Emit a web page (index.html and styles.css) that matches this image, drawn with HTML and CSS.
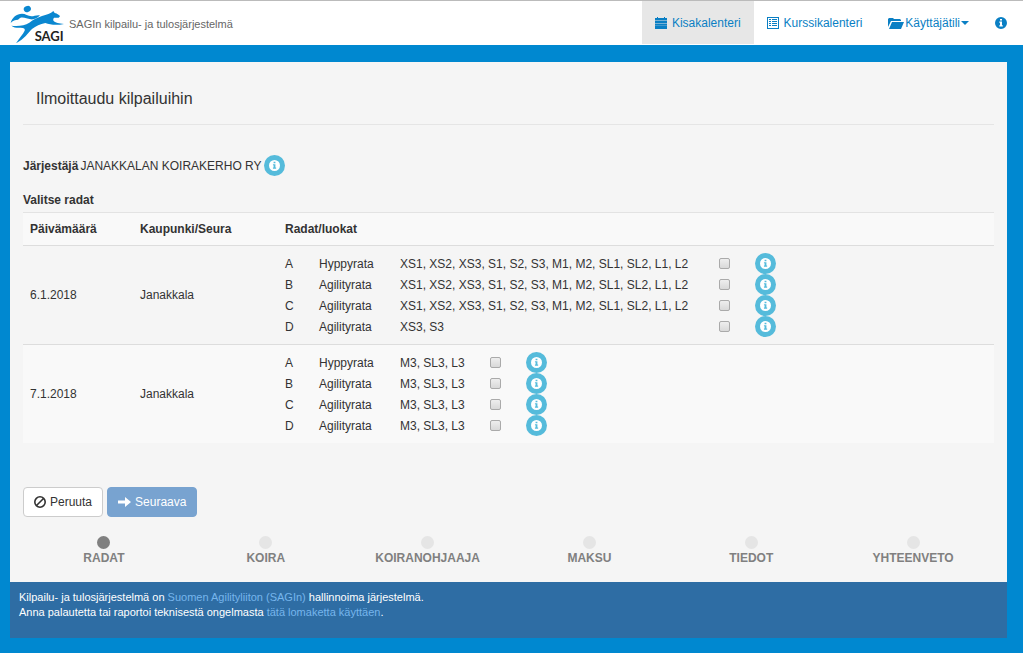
FILE: index.html
```html
<!DOCTYPE html>
<html lang="fi">
<head>
<meta charset="utf-8">
<title>SAGIn kilpailu- ja tulosjärjestelmä</title>
<link rel="stylesheet" href="styles.css">
</head>
<body>
<svg class="defs" width="0" height="0" aria-hidden="true">
  <symbol id="info" viewBox="0 0 12 12"><path fill="currentColor" fill-rule="evenodd" d="M6 0a6 6 0 1 0 0 12A6 6 0 0 0 6 0zM5 2h2v1.600H5zM4.300 4.600H7v3.700h.8v1.200H4.300V8.300H5V5.800h-.7z"/></symbol>
</svg>
<header class="topbar">
  <a class="brand" href="#">
    <svg class="logo" viewBox="30 9 168 126" role="img" aria-label="SAGI">
      <g fill="#0a87d0">
        <ellipse cx="82" cy="27" rx="11" ry="9" transform="rotate(-25 82 27)"/>
        <path d="M32 69C36 52 50 41 66 41C76 41 84 48 94 49C102 49 108 45 120 46C112 55 103 59 92 58C80 56 70 50 60 54L54 59C46 59 38 62 32 69z"/>
        <path d="M34 77C56 80 74 76 88 68C98 60 110 54 126 48C140 44 152 42 160 33L164 39C172 41 178 45 180 49L176 53L162 53C156 62 160 68 192 72C168 77 150 74 136 69C120 72 108 78 96 87C84 99 74 116 48 130C58 114 68 104 74 92C76 86 72 83 62 83C52 84 42 83 34 77z"/>
      </g>
      <text class="logo-text" x="104" y="124">SAGI</text>
    </svg>
    <span>SAGIn kilpailu- ja tulosjärjestelmä</span>
  </a>
  <nav class="nav">
    <a class="nav-item active" href="#"><svg width="12" height="12" viewBox="0 0 12 12" fill="currentColor"><path d="M0 1h2V0h1v1h6V0h1v1h2v2H0zM0 3.500h12V6H0zM0 6.400h12v2.300H0zM0 9.100h12V12H0z"/></svg><span>Kisakalenteri</span></a>
    <a class="nav-item" href="#"><svg width="12" height="12" viewBox="0 0 12 12" fill="currentColor"><path fill-rule="evenodd" d="M0 0h12v12H0zM1 1v10h10V1zM2 2h2v1H2zM5 2h5v1H5zM2 4h2v1H2zM5 4h5v1H5zM2 6h2v1H2zM5 6h5v1H5zM2 8h2v1H2zM5 8h5v1H5z"/></svg><span>Kurssikalenteri</span></a>
    <a class="nav-item tight" href="#"><svg width="16" height="12" viewBox="0 0 16 12" fill="currentColor"><path d="M0 10V2l1-1h4l1 1h6l1 1v1H3zM4 5h12l-3 7H1z"/></svg><span>Käyttäjätili</span><i class="caret"></i></a>
    <a class="nav-item" href="#" aria-label="Tietoja"><svg width="12" height="12"><use href="#info"/></svg></a>
  </nav>
</header>
<div class="page">
  <main class="panel">
    <h1 class="title">Ilmoittaudu kilpailuihin</h1>
    <p class="organizer"><b>Järjestäjä</b><span>JANAKKALAN KOIRAKERHO RY</span><button class="info" aria-label="Tiedot"><svg width="11" height="11"><use href="#info"/></svg></button></p>
    <h2 class="subtitle">Valitse radat</h2>
    <table class="days">
      <thead><tr><th class="date">Päivämäärä</th><th class="city">Kaupunki/Seura</th><th>Radat/luokat</th></tr></thead>
      <tbody>
        <tr><td>6.1.2018</td><td>Janakkala</td><td>
          <table class="tracks long">
            <tr><td>A</td><td>Hyppyrata</td><td>XS1, XS2, XS3, S1, S2, S3, M1, M2, SL1, SL2, L1, L2</td><td><input type="checkbox" aria-label="6.1. rata A"></td><td><button class="info" aria-label="Rata A"><svg width="11" height="11"><use href="#info"/></svg></button></td></tr>
            <tr><td>B</td><td>Agilityrata</td><td>XS1, XS2, XS3, S1, S2, S3, M1, M2, SL1, SL2, L1, L2</td><td><input type="checkbox" aria-label="6.1. rata B"></td><td><button class="info" aria-label="Rata B"><svg width="11" height="11"><use href="#info"/></svg></button></td></tr>
            <tr><td>C</td><td>Agilityrata</td><td>XS1, XS2, XS3, S1, S2, S3, M1, M2, SL1, SL2, L1, L2</td><td><input type="checkbox" aria-label="6.1. rata C"></td><td><button class="info" aria-label="Rata C"><svg width="11" height="11"><use href="#info"/></svg></button></td></tr>
            <tr><td>D</td><td>Agilityrata</td><td>XS3, S3</td><td><input type="checkbox" aria-label="6.1. rata D"></td><td><button class="info" aria-label="Rata D"><svg width="11" height="11"><use href="#info"/></svg></button></td></tr>
          </table></td></tr>
        <tr><td>7.1.2018</td><td>Janakkala</td><td>
          <table class="tracks">
            <tr><td>A</td><td>Hyppyrata</td><td>M3, SL3, L3</td><td><input type="checkbox" aria-label="7.1. rata A"></td><td><button class="info" aria-label="Rata A"><svg width="11" height="11"><use href="#info"/></svg></button></td></tr>
            <tr><td>B</td><td>Agilityrata</td><td>M3, SL3, L3</td><td><input type="checkbox" aria-label="7.1. rata B"></td><td><button class="info" aria-label="Rata B"><svg width="11" height="11"><use href="#info"/></svg></button></td></tr>
            <tr><td>C</td><td>Agilityrata</td><td>M3, SL3, L3</td><td><input type="checkbox" aria-label="7.1. rata C"></td><td><button class="info" aria-label="Rata C"><svg width="11" height="11"><use href="#info"/></svg></button></td></tr>
            <tr><td>D</td><td>Agilityrata</td><td>M3, SL3, L3</td><td><input type="checkbox" aria-label="7.1. rata D"></td><td><button class="info" aria-label="Rata D"><svg width="11" height="11"><use href="#info"/></svg></button></td></tr>
          </table></td></tr>
      </tbody>
    </table>
    <div class="actions">
      <button class="btn"><svg width="12" height="12" viewBox="0 0 12 12" fill="none" stroke="currentColor" stroke-width="1.600"><circle cx="6" cy="6" r="5.200"/><path d="M2.500 9.500l7-7"/></svg>Peruuta</button>
      <button class="btn primary"><svg width="13" height="12" viewBox="0 0 13 12" fill="currentColor"><path d="M0 4.600h7V1l6 5-6 5V7.400H0z"/></svg>Seuraava</button>
    </div>
    <ol class="steps">
      <li class="current">RADAT</li><li>KOIRA</li><li>KOIRANOHJAAJA</li><li>MAKSU</li><li>TIEDOT</li><li>YHTEENVETO</li>
    </ol>
  </main>
  <footer class="footer">
    <p>Kilpailu- ja tulosjärjestelmä on <a href="#">Suomen Agilityliiton (SAGIn)</a> hallinnoima järjestelmä.</p>
    <p>Anna palautetta tai raportoi teknisestä ongelmasta <a href="#">tätä lomaketta käyttäen</a>.</p>
  </footer>
</div>
</body>
</html>
```

FILE: styles.css
```css
* { box-sizing: border-box; }
body { margin: 0; min-height: 100vh; background: #0088d0; color: #333; font: 12px/18px "Liberation Sans", Arial, sans-serif; }
.defs { position: absolute; }
svg { display: block; flex: none; }
a { text-decoration: none; }
h1, h2, p, ol { margin: 0; padding: 0; }
button { font: inherit; cursor: pointer; }

.topbar { display: flex; justify-content: space-between; height: 45px; padding: 0 3px 0 10px; background: #fff; border-top: 1px solid #bbb; }
.brand { display: flex; align-items: center; gap: 3px; padding-top: 2px; color: #666; font-size: 11px; }
.logo { width: 56px; height: 42px; }
.logo-text { font: bold 39px Lato, sans-serif; fill: #222; }
.nav { display: flex; height: 43px; }
.nav-item { display: flex; align-items: center; gap: 5px; padding: 0 13px; color: #0a7fc4; }
.nav-item.tight { gap: 1px; }
.nav-item.active { background: #e7e7e7; }
.caret { border: 4px solid transparent; border-top-color: currentColor; border-bottom: 0; }

.page { padding: 17px 16px 15px 10px; }
.panel { padding: 0 13px 15px; background: #f5f5f5; }
.title { padding: 27px 13px 15px; border-bottom: 1px solid #e5e5e5; font-size: 16px; line-height: 20px; font-weight: normal; }
.organizer { display: flex; align-items: center; gap: 2px; padding-top: 30px; }
.info { display: flex; align-items: center; justify-content: center; width: 21px; height: 21px; padding: 0; border: 0; border-radius: 50%; background: #55bbdb; color: #fff; }
.subtitle { padding: 15px 0 3px; font-size: 12px; line-height: 18px; }

.days { width: 100%; border-collapse: collapse; border-top: 1px solid #e3e3e3; }
.days th { padding: 7px; text-align: left; background: #f9f9f9; }
.date { width: 110px; }
.city { width: 145px; }
.days > tbody > tr > td { padding: 7px; border-top: 1px solid #ddd; }
.days > tbody > tr:nth-child(even) { background: #f9f9f9; }
.tracks { border-collapse: collapse; }
.tracks td { height: 21px; padding: 0 25px 0 0; }
.tracks td:nth-child(1) { width: 34px; }
.tracks td:nth-child(2) { width: 81px; }
.tracks.long td:nth-child(3) { width: 319px; }
.tracks input { display: block; appearance: none; width: 11px; height: 11px; margin: 0; border: 1px solid #aaa; border-radius: 2px; background: linear-gradient(#eee, #d9d9d9); }

.actions { display: flex; gap: 4px; padding-top: 44px; }
.btn { display: flex; align-items: center; gap: 4px; height: 30px; padding: 0 10px; border: 1px solid #ccc; border-radius: 4px; background: #fff; color: #333; }
.primary { border-color: #78a3d0; background: #78a3d0; color: #fff; }
.steps { display: grid; grid-template-columns: repeat(6, 1fr); padding-top: 19px; list-style: none; text-align: center; font-weight: bold; color: #808080; }
.steps li::before { content: ""; display: block; width: 13px; height: 13px; margin: 0 auto; border-radius: 50%; background: #e5e5e5; }
.steps .current::before { background: #808080; }

.footer { padding: 8px 9px 18px; background: #2e6da4; color: #fff; font-size: 11px; line-height: 15px; }
.footer a { color: #76b5ec; }
```
